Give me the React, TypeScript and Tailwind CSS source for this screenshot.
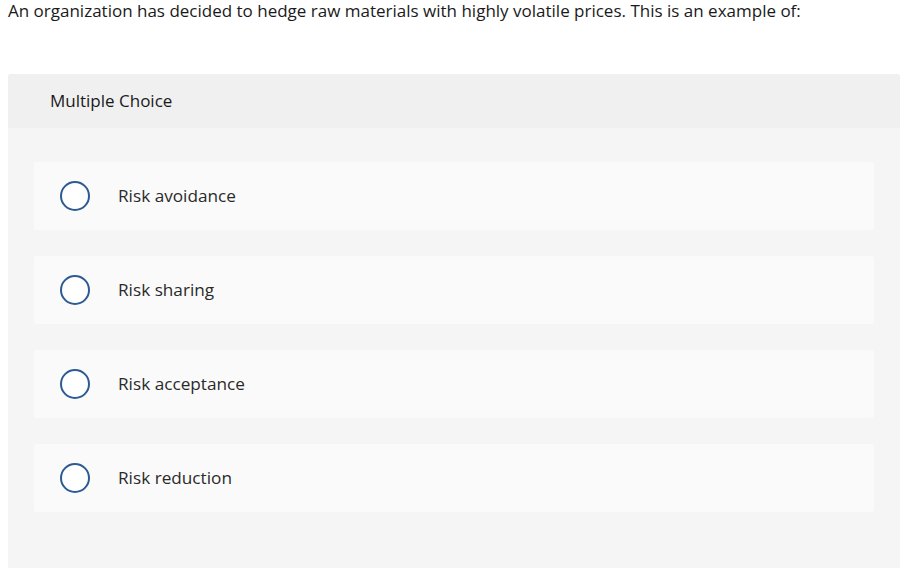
import React from "react";

const options = ["Risk avoidance", "Risk sharing", "Risk acceptance", "Risk reduction"];

export default function App() {
  return (
    <div className="w-[924px] h-[568px] overflow-hidden bg-white" style={{ fontFamily: "'Open Sans', 'Liberation Sans', sans-serif" }}>
      <div className="pl-[8px] text-[17px] leading-[21px] text-[#1a1a1a]">
        An organization has decided to hedge raw materials with highly volatile prices. This is an example of:
      </div>
      <div className="ml-[8px] mt-[53px] w-[892px] h-[600px] rounded-t-[3px] bg-[#f5f5f5]">
        <div className="h-[54px] rounded-t-[3px] bg-[#f0f0f0] flex items-center pl-[42px] text-[17px] text-[#1a1a1a]">
          Multiple Choice
        </div>
        <div className="pt-[34px] px-[26px] flex flex-col gap-[26px]">
          {options.map((o) => (
            <div key={o} className="h-[68px] rounded-[3px] bg-[#fafafa] flex items-center pl-[26px]">
              <div className="w-[30px] h-[30px] rounded-full border-2 border-[#2c5a93] bg-white shrink-0" />
              <div className="ml-[28px] text-[17.2px] text-[#2a2a2a]">{o}</div>
            </div>
          ))}
        </div>
      </div>
    </div>
  );
}
